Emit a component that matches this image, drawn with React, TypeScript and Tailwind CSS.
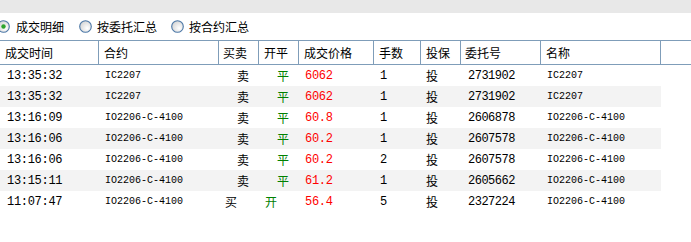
import React from 'react';

interface Trade {
  time: string;
  contract: string;
  side: '买' | '卖';
  offset: '开' | '平';
  price: string;
  qty: string;
  hedge: string;
  orderNo: string;
  name: string;
}

const trades: Trade[] = [
  { time: '13:35:32', contract: 'IC2207', side: '卖', offset: '平', price: '6062', qty: '1', hedge: '投', orderNo: '2731902', name: 'IC2207' },
  { time: '13:35:32', contract: 'IC2207', side: '卖', offset: '平', price: '6062', qty: '1', hedge: '投', orderNo: '2731902', name: 'IC2207' },
  { time: '13:16:09', contract: 'IO2206-C-4100', side: '卖', offset: '平', price: '60.8', qty: '1', hedge: '投', orderNo: '2606878', name: 'IO2206-C-4100' },
  { time: '13:16:06', contract: 'IO2206-C-4100', side: '卖', offset: '平', price: '60.2', qty: '1', hedge: '投', orderNo: '2607578', name: 'IO2206-C-4100' },
  { time: '13:16:06', contract: 'IO2206-C-4100', side: '卖', offset: '平', price: '60.2', qty: '2', hedge: '投', orderNo: '2607578', name: 'IO2206-C-4100' },
  { time: '13:15:11', contract: 'IO2206-C-4100', side: '卖', offset: '平', price: '61.2', qty: '1', hedge: '投', orderNo: '2605662', name: 'IO2206-C-4100' },
  { time: '11:07:47', contract: 'IO2206-C-4100', side: '买', offset: '开', price: '56.4', qty: '5', hedge: '投', orderNo: '2327224', name: 'IO2206-C-4100' },
];

const cjk = "font-['Noto_Sans_CJK_SC','Noto_Sans',sans-serif]";
const mono = "font-['Liberation_Mono','DejaVu_Sans_Mono',monospace]";

const Radio = ({ checked }: { checked?: boolean }) => (
  <svg width="13" height="13" viewBox="0 0 13 13" className="shrink-0">
    <defs>
      <radialGradient id={checked ? 'rg-on' : 'rg-off'} cx="0.65" cy="0.65" r="0.7">
        <stop offset="0" stopColor="#ffffff" />
        <stop offset="1" stopColor="#d4d4d4" />
      </radialGradient>
    </defs>
    <circle cx="6.5" cy="6.5" r="5.8" fill={`url(#${checked ? 'rg-on' : 'rg-off'})`} stroke="#4b77a6" strokeWidth="1.1" />
    {checked && <circle cx="6.5" cy="6.5" r="2.2" fill="#2ea42e" />}
  </svg>
);

const headers = [
  { label: '成交时间', w: 'w-[99px]', pl: 'pl-[5px]' },
  { label: '合约', w: 'w-[120px]', pl: 'pl-[5px]' },
  { label: '买卖', w: 'w-[40px]', pl: 'pl-[4px]' },
  { label: '开平', w: 'w-[40px]', pl: 'pl-[5px]' },
  { label: '成交价格', w: 'w-[75px]', pl: 'pl-[5px]' },
  { label: '手数', w: 'w-[47px]', pl: 'pl-[5px]' },
  { label: '投保', w: 'w-[40px]', pl: 'pl-[5px]' },
  { label: '委托号', w: 'w-[80px]', pl: 'pl-[4px]' },
  { label: '名称', w: 'w-[120px]', pl: 'pl-[5px]' },
];

export default function App() {
  return (
    <div className="w-[691px] h-[242px] bg-white overflow-hidden text-black">
      <div className="h-[13px] bg-[#e8e8e8]" />

      {/* Radio filter row */}
      <div className={`h-[27px] flex items-center text-[12px] ${cjk}`}>
        <div className="flex items-center gap-[6px] ml-[-3px]">
          <Radio checked />
          <span>成交明细</span>
        </div>
        <div className="flex items-center gap-[5px] ml-[15px]">
          <Radio />
          <span>按委托汇总</span>
        </div>
        <div className="flex items-center gap-[5px] ml-[14px]">
          <Radio />
          <span>按合约汇总</span>
        </div>
      </div>

      {/* Header */}
      <div className={`flex h-[25px] border-y border-[#7f9db9] text-[12px] ${cjk}`}>
        {headers.map(h => (
          <div key={h.label} className={`${h.w} ${h.pl} shrink-0 border-r border-[#7f9db9] flex items-center`}>
            {h.label}
          </div>
        ))}
        <div className="flex-1" />
      </div>

      {/* Rows */}
      <div className="w-[661px]">
        {trades.map((t, i) => (
          <div key={i} className={`flex h-[21px] items-center ${i % 2 === 0 ? 'bg-white' : 'bg-[#f3f3f3]'}`}>
            <div className={`w-[99px] pl-[7px] shrink-0 text-[12px] tracking-[-0.3px] ${mono}`}>{t.time}</div>
            <div className={`w-[120px] pl-[6px] shrink-0 text-[10px] ${mono}`}>{t.contract}</div>
            <div className={`w-[40px] shrink-0 text-[12px] ${cjk} ${t.side === '卖' ? 'pl-[18px]' : 'pl-[6px]'}`}>{t.side}</div>
            <div className={`w-[40px] shrink-0 text-[12px] text-[#008000] ${cjk} ${t.offset === '平' ? 'pl-[18px]' : 'pl-[6px]'}`}>{t.offset}</div>
            <div className={`w-[75px] pl-[6px] shrink-0 text-[12px] tracking-[-0.3px] text-[#ff0000] ${mono}`}>{t.price}</div>
            <div className={`w-[47px] pl-[6px] shrink-0 text-[12px] ${mono}`}>{t.qty}</div>
            <div className={`w-[40px] pl-[5px] shrink-0 text-[12px] ${cjk}`}>{t.hedge}</div>
            <div className={`w-[80px] pl-[7px] shrink-0 text-[12px] tracking-[-0.5px] ${mono}`}>{t.orderNo}</div>
            <div className={`w-[120px] pl-[6px] shrink-0 text-[10px] ${mono}`}>{t.name}</div>
          </div>
        ))}
      </div>
    </div>
  );
}
